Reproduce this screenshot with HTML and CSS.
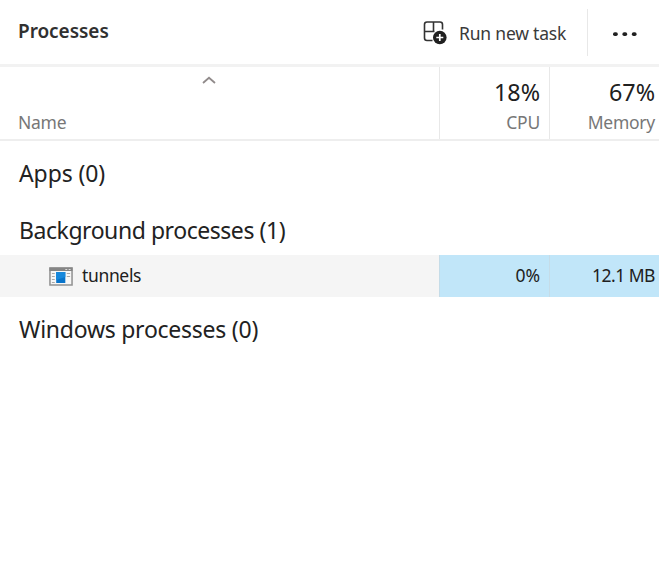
FILE: index.html
```html
<!DOCTYPE html>
<html lang="en">
<head>
<meta charset="utf-8">
<title>Processes</title>
<link rel="stylesheet" href="styles.css">
</head>
<body>
<header class="toolbar">
  <h1 class="title">Processes</h1>
  <button class="run-task">
    <svg class="task-icon" width="24" height="24" viewBox="0 0 24 24" fill="none">
      <path d="M9.5 19.5H4Q1.5 19.5 1.5 17V3.5Q1.5 1 4 1H17Q19.5 1 19.5 3.5V8.5M1.5 10.5H11.5M10.5 1V10.5" stroke="#333" stroke-width="1.6"/>
      <circle cx="16.8" cy="16.5" r="6.8" fill="#202020"/>
      <path d="M13.3 16.5H20.3M16.8 13V20" stroke="#fff" stroke-width="1.7"/>
    </svg>
    <span class="run-label">Run new task</span>
  </button>
  <button class="more" aria-label="More">
    <svg width="26" height="6" viewBox="0 0 26 6" fill="#202020"><rect x="1" y="1.2" width="4.8" height="3.8" rx="1.8"/><rect x="10.4" y="1.2" width="4.8" height="3.8" rx="1.8"/><rect x="19.8" y="1.2" width="4.8" height="3.8" rx="1.8"/></svg>
  </button>
</header>
<main class="table">
  <div class="columns head">
    <div class="name-head">
      <svg class="sort" width="14" height="8" viewBox="0 0 14 8" fill="none"><path d="M1 7L7 1.8L13 7" stroke="#918b8b" stroke-width="1.8"/></svg>
      <span class="caption name">Name</span>
    </div>
    <div class="metric"><span class="total cpu-total">18%</span><span class="caption cpu">CPU</span></div>
    <div class="metric"><span class="total mem-total">67%</span><span class="caption memory">Memory</span></div>
  </div>
  <h2 class="group apps">Apps (0)</h2>
  <h2 class="group background">Background processes (1)</h2>
  <div class="columns row">
    <div class="process">
      <svg width="24" height="19" viewBox="0 0 25 19" preserveAspectRatio="none">
        <path d="M1 1H24V18H1Z" fill="#f7f7f7" stroke="#929292" stroke-width="1.6"/>
        <path d="M0.5 0.5H24.5V4H0.5Z" fill="#858585"/>
        <path d="M17 2.5H19M20.5 2.5H22.5" stroke="#ddd"/>
        <path d="M3 6.5H6M3 9.5H6M3 12.5H6M3 15.5H6M18.5 6.5H22M18.5 9.5H22" stroke="#aaa" stroke-width="1.2"/>
        <path d="M7.5 5H17V16H7.5Z" fill="#0874cb"/>
        <path d="M7.5 5H17V10L7.5 13Z" fill="#1688dc"/>
      </svg>
      <span class="process-name">tunnels</span>
    </div>
    <div class="value"><span class="cpu-value">0%</span></div>
    <div class="value"><span class="mem-value">12.1 MB</span></div>
  </div>
  <h2 class="group windows">Windows processes (0)</h2>
</main>
</body>
</html>
```
FILE: styles.css
```css
* { box-sizing: border-box; }
body { margin: 0; background: #fff; color: #202020; font-family: "Noto Sans", "Open Sans", sans-serif; overflow: hidden; }
h1, h2 { margin: 0; font-weight: 400; white-space: nowrap; }
button { border: 0; padding: 0; background: none; color: inherit; font: inherit; }
span { white-space: nowrap; }
.toolbar { display: flex; height: 67px; border-bottom: 3px solid #f2f2f2; }
.title { flex: 1; padding: 18px 0 0 18px; font-size: 19px; line-height: 26px; font-weight: 600; color: #303030; letter-spacing: -0.05px; }
.run-task { display: flex; width: 165px; height: 47px; margin-top: 9px; padding-top: 12px; border-right: 1px solid #e8e8e8; }
.task-icon { flex: none; }
.run-label { margin-left: 12px; font-size: 17.5px; line-height: 25px; color: #3a3a3a; letter-spacing: -0.2px; }
.more { display: flex; width: 71px; height: 67px; align-items: center; padding-left: 24px; }
.columns { display: grid; grid-template-columns: 439px 110px 110px; }
.head { height: 74px; border-bottom: 2px solid #eee; }
.name-head { display: flex; flex-direction: column; padding-left: 18px; }
.sort { margin: 9px 0 0 184px; }
.metric { display: flex; flex-direction: column; align-items: flex-end; padding: 10px 9px 0 0; border-left: 1px solid #e8e8e8; }
.metric:last-child { padding-right: 4px; }
.total { font-size: 23.3px; line-height: 30px; }
.caption { font-size: 17.5px; line-height: 24px; color: #777; margin-top: 3px; letter-spacing: -0.25px; }
.name { margin-top: 26px; }
.group { padding-left: 19px; font-size: 23px; line-height: 30px; color: #222; }
.apps { margin-top: 17px; letter-spacing: -0.1px; }
.background { margin-top: 27px; letter-spacing: -0.45px; }
.row { height: 42px; margin-top: 10px; font-size: 17.5px; line-height: 24px; }
.process { display: flex; align-items: center; padding-left: 49px; background: #f5f5f5; }
.process-name { margin: -2px 0 0 9px; letter-spacing: -0.35px; }
.value { display: flex; align-items: center; justify-content: flex-end; padding: 0 9px 2px 0; border-left: 1px solid #c5dce8; background: #c1e6f9; }
.value:last-child { padding-right: 4px; }
.mem-value { letter-spacing: -0.5px; }
.windows { margin-top: 17px; letter-spacing: -0.25px; }
```
